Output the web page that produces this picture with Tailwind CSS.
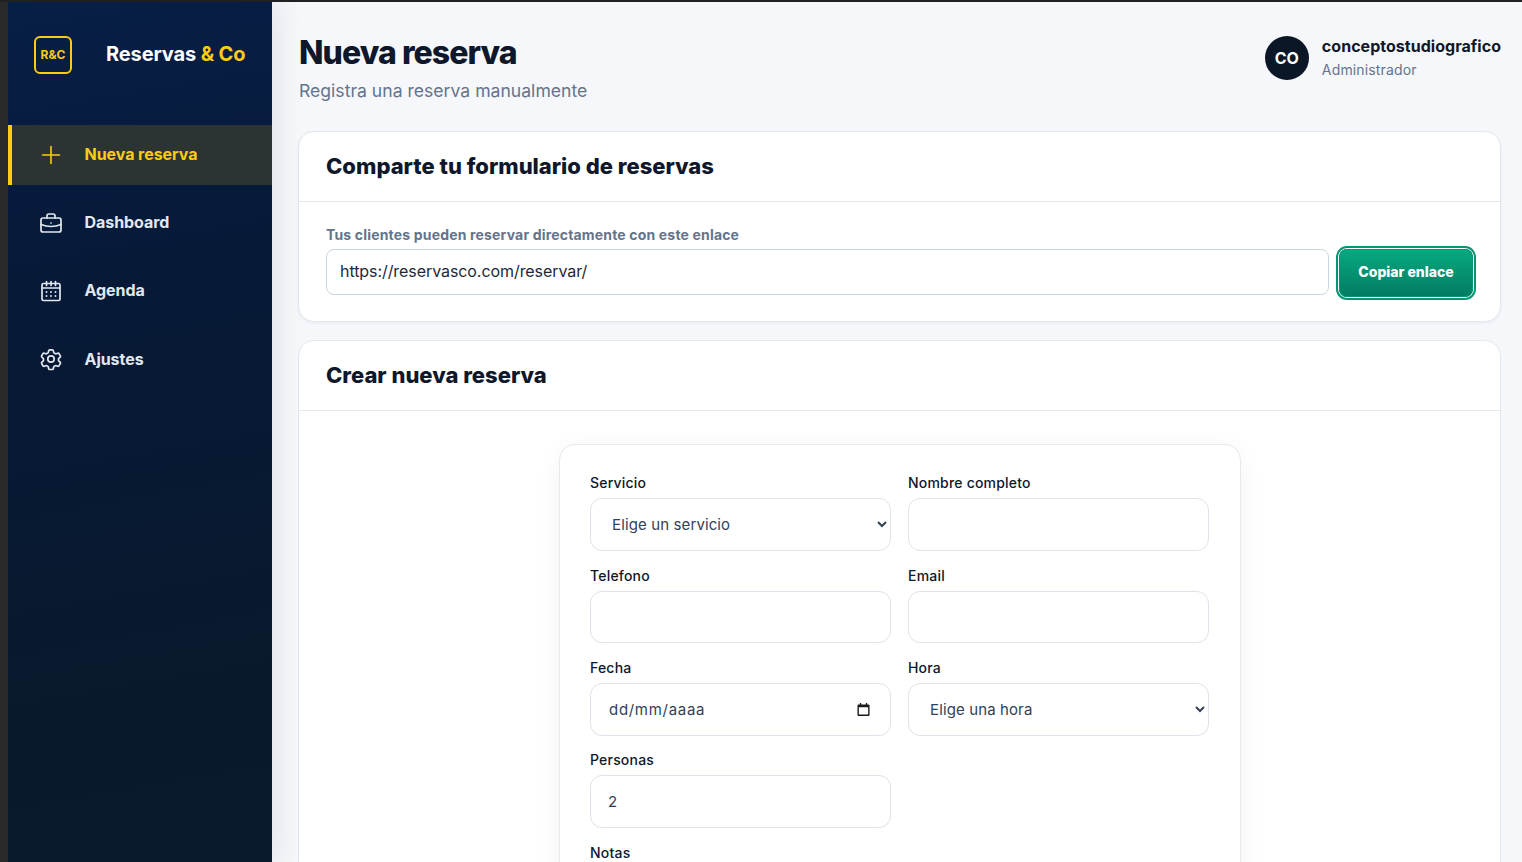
<!DOCTYPE html>
<html lang="es">
<head>
  <meta charset="UTF-8" />
  <meta name="viewport" content="width=device-width, initial-scale=1.0"/>
  <title>Nueva reserva</title>
  <script src="https://cdn.jsdelivr.net/npm/@tailwindcss/browser@4"></script>
</head>
<body class="h-[862px] overflow-hidden bg-[#f6f7fb] font-['Inter',sans-serif] text-[#0f172a]">
  <div class="h-[2px] bg-[#1f2325]"></div>
  <div class="flex h-[860px]">
    <div class="w-[8px] shrink-0 bg-[#2b2b2b]"></div>

    <!-- Sidebar -->
    <aside class="relative z-10 w-[264px] shrink-0 bg-[linear-gradient(170deg,#071e46_0%,#061936_35%,#09192d_80%,#0a1a2c_100%)] shadow-[8px_0_24px_rgba(15,23,42,0.08)]">
      <div class="flex h-[123px] items-start pl-[26px] pt-[34px]">
        <div class="flex h-[38px] w-[38px] items-center justify-center rounded-[6px] border-2 border-[#facc15] text-[12px] font-bold text-[#facc15]">R&amp;C</div>
        <div class="ml-[34px] mt-[5px] text-[20px] leading-[26px] font-bold tracking-[-0.12px] text-white">Reservas <span class="text-[#facc15]">&amp; Co</span></div>
      </div>

      <nav>
        <a class="flex h-[60px] items-center border-l-4 border-[#facc15] bg-[#2c3433] pl-[27px] text-[16px] font-bold tracking-[-0.05px] text-[#facc15]">
          <svg class="h-[24px] w-[24px]" viewBox="0 0 24 24" fill="none" stroke="currentColor" stroke-width="1.6" stroke-linecap="round"><path d="M12 3.5v17M3.5 12h17"/></svg>
          <span class="ml-[21.5px] -translate-y-px">Nueva reserva</span>
        </a>
        <a class="mt-[8px] flex h-[60px] items-center pl-[31px] text-[16px] font-bold tracking-[-0.05px] text-[#e2e8f0]">
          <svg class="h-[24px] w-[24px]" viewBox="0 0 24 24" fill="none" stroke="currentColor" stroke-width="1.7" stroke-linecap="round" stroke-linejoin="round"><path d="M8 7V4.8C8 3.800 8.800 3 9.800 3h4.400c1 0 1.800.8 1.800 1.800V7"/><rect x="2" y="7" width="20" height="14" rx="2"/><path d="M2 13.500c6 2.400 14 2.400 20 0"/><path d="M12 12h.01"/></svg>
          <span class="ml-[21.5px] -translate-y-px">Dashboard</span>
        </a>
        <a class="mt-[8px] flex h-[60px] items-center pl-[31px] text-[16px] font-bold tracking-[-0.05px] text-[#e2e8f0]">
          <svg class="h-[24px] w-[24px]" viewBox="0 0 24 24" fill="none" stroke="currentColor" stroke-width="1.7" stroke-linecap="round" stroke-linejoin="round"><rect x="3" y="4.500" width="18" height="17" rx="1.500"/><path d="M7.500 2.500v4M12 2.500v4M16.500 2.500v4M3 9h18"/><path stroke-width="1.900" d="M7.500 13h.01M12 13h.01M16.500 13h.01M7.500 17h.01M12 17h.01M16.500 17h.01"/></svg>
          <span class="ml-[21.5px] -translate-y-px">Agenda</span>
        </a>
        <a class="mt-[8px] flex h-[60px] items-center pl-[31px] text-[16px] font-bold tracking-[-0.05px] text-[#e2e8f0]">
          <svg class="h-[24px] w-[24px]" viewBox="0 0 24 24" fill="none" stroke="currentColor" stroke-width="1.700" stroke-linecap="round" stroke-linejoin="round"><path d="M9.600 3.900c.1-.6.600-1 1.200-1h2.400c.6 0 1.100.4 1.200 1l.2 1.300c.1.400.3.700.7.900l.9.500c.3.200.8.200 1.100.1l1.300-.5c.6-.2 1.200 0 1.500.5l1.200 2.100c.3.500.2 1.200-.3 1.500l-1 .9c-.3.200-.5.600-.5 1v1c0 .4.200.8.500 1l1 .9c.5.300.6 1 .3 1.500l-1.200 2.100c-.3.500-.9.700-1.500.5l-1.300-.5c-.3-.1-.8-.1-1.100.1l-.9.500c-.4.200-.6.500-.7.900l-.2 1.300c-.1.600-.6 1-1.200 1h-2.400c-.6 0-1.100-.4-1.200-1l-.2-1.300c-.1-.4-.3-.7-.7-.9l-.9-.5c-.3-.2-.8-.2-1.100-.1l-1.300.5c-.6.200-1.200 0-1.500-.5l-1.200-2.100c-.3-.5-.2-1.200.3-1.500l1-.9c.3-.2.500-.6.500-1v-1c0-.4-.2-.8-.5-1l-1-.9c-.5-.3-.6-1-.3-1.500l1.200-2.100c.3-.5.900-.7 1.500-.5l1.300.5c.3.100.8.100 1.100-.1l.9-.5c.4-.2.600-.5.700-.9z"/><circle cx="12" cy="12" r="3.200"/></svg>
          <span class="ml-[21.5px]">Ajustes</span>
        </a>
      </nav>
    </aside>

    <!-- Main -->
    <main class="min-w-0 flex-1 pl-[26px] pr-[21px]">
      <header class="flex h-[129px] items-start justify-between">
        <div class="pl-[1px] pt-[31px]">
          <h1 class="text-[32px] leading-[40px] font-extrabold tracking-[-0.95px] text-[#0f172a]">Nueva reserva</h1>
          <p class="mt-[6px] text-[17.6px] leading-[24px] text-[#64748b]">Registra una reserva manualmente</p>
        </div>
        <div class="flex items-start pt-[34px]">
          <div class="flex h-[44px] w-[44px] items-center justify-center rounded-full bg-[#0b1727] text-[16px] font-bold text-white">CO</div>
          <div class="ml-[13px]">
            <div class="text-[16px] leading-[20px] font-bold tracking-[0.03px] text-[#0f172a]">conceptostudiografico</div>
            <div class="mt-[4px] text-[14px] leading-[20px] tracking-[0.15px] text-[#64748b]">Administrador</div>
          </div>
        </div>
      </header>

      <section class="h-[191px] rounded-[16px] border border-[#e2e8f0] bg-white shadow-[0_1px_3px_rgba(15,23,42,0.06)]">
        <div class="flex h-[70px] items-center border-b border-[#e2e8f0] px-[27px]">
          <h2 class="text-[22px] font-extrabold text-[#0f172a]">Comparte tu formulario de reservas</h2>
        </div>
        <div class="px-[27px] pt-[24px]">
          <label class="block text-[14px] leading-[18px] font-bold tracking-[0.17px] text-[#64748b]">Tus clientes pueden reservar directamente con este enlace</label>
          <div class="flex items-start gap-[10px]">
            <input class="mt-[5px] h-[46px] min-w-0 flex-1 rounded-[8px] border border-[#cbd5e1] bg-white px-[13px] pb-[2px] text-[16px] tracking-[-0.07px] text-[#1e293b]" value="https://reservasco.com/reservar/" />
            <button class="mt-[5px] flex h-[48px] w-[134px] items-center justify-center rounded-[8px] bg-gradient-to-b from-[#05ab80] to-[#047a62] pb-[3px] text-[14px] font-extrabold text-white outline-2 outline-offset-1 outline-[#059474] [box-shadow:inset_0_0_0_1px_#059474]">Copiar enlace</button>
          </div>
        </div>
      </section>

      <section class="mt-[18px] h-[600px] rounded-[16px] border border-[#e2e8f0] bg-white">
        <div class="flex h-[70px] items-center border-b border-[#e2e8f0] px-[27px]">
          <h2 class="text-[22px] font-extrabold text-[#0f172a]">Crear nueva reserva</h2>
        </div>
        <div class="flex justify-center pl-[1px] pt-[33px]">
          <div class="h-[600px] w-[682px] rounded-[16px] border border-[#e5e9f0] bg-white p-[30px] shadow-[0_4px_24px_rgba(15,23,42,0.05)]">
            <div class="grid grid-cols-[301px_301px] gap-x-[17px] gap-y-[17px]">
              <div>
                <label class="block h-[23px] text-[14px] leading-[16px] font-medium tracking-[0.2px] text-[#0f172a]">Servicio</label>
                <select class="h-[53px] w-full rounded-[12px] border border-[#dde3ea] bg-white px-[17px] text-[15px] tracking-[0.12px] text-[#334155]"><option>Elige un servicio</option></select>
              </div>
              <div>
                <label class="block h-[23px] text-[14px] leading-[16px] font-medium tracking-[0.2px] text-[#0f172a]">Nombre completo</label>
                <input class="h-[53px] w-full rounded-[12px] border border-[#dde3ea] bg-white px-[17px] text-[15px]" />
              </div>
              <div>
                <label class="block h-[23px] text-[14px] leading-[16px] font-medium tracking-[0.2px] text-[#0f172a]">Telefono</label>
                <input class="h-[52px] w-full rounded-[12px] border border-[#dde3ea] bg-white px-[17px] text-[15px]" />
              </div>
              <div>
                <label class="block h-[23px] text-[14px] leading-[16px] font-medium tracking-[0.2px] text-[#0f172a]">Email</label>
                <input class="h-[52px] w-full rounded-[12px] border border-[#dde3ea] bg-white px-[17px] text-[15px]" />
              </div>
              <div>
                <label class="block h-[23px] text-[14px] leading-[16px] font-medium tracking-[0.2px] text-[#0f172a]">Fecha</label>
                <div class="flex h-[53px] w-full items-center justify-between rounded-[12px] border border-[#dde3ea] bg-white pl-[18px] pr-[20px] text-[15px] tracking-[0.7px] text-[#334155]">
                  <span class="translate-y-px">dd/mm/aaaa</span>
                  <svg class="h-[13px] w-[13px] text-[#1a1a1a]" viewBox="0 0 14 14" fill="currentColor"><path d="M3 0h1.500v1.500h5V0H11v1.500h1.500c.6 0 1 .4 1 1V13c0 .6-.4 1-1 1h-11c-.6 0-1-.4-1-1V2.500c0-.6.4-1 1-1H3zM2 4.500v8h10v-8z"/></svg>
                </div>
              </div>
              <div>
                <label class="block h-[23px] text-[14px] leading-[16px] font-medium tracking-[0.2px] text-[#0f172a]">Hora</label>
                <select class="h-[53px] w-full rounded-[12px] border border-[#dde3ea] bg-white px-[17px] text-[15px] tracking-[0.12px] text-[#334155]"><option>Elige una hora</option></select>
              </div>
              <div class="-mt-px">
                <label class="block h-[23px] text-[14px] leading-[16px] font-medium tracking-[0.2px] text-[#0f172a]">Personas</label>
                <input class="h-[53px] w-full rounded-[12px] border border-[#dde3ea] bg-white px-[17px] text-[15px] text-[#334155]" value="2" />
              </div>
              <div></div>
              <div class="col-span-2">
                <label class="block h-[23px] text-[14px] leading-[16px] font-medium tracking-[0.2px] text-[#0f172a]">Notas</label>
              </div>
            </div>
          </div>
        </div>
      </section>
    </main>
  </div>
</body>
</html>
